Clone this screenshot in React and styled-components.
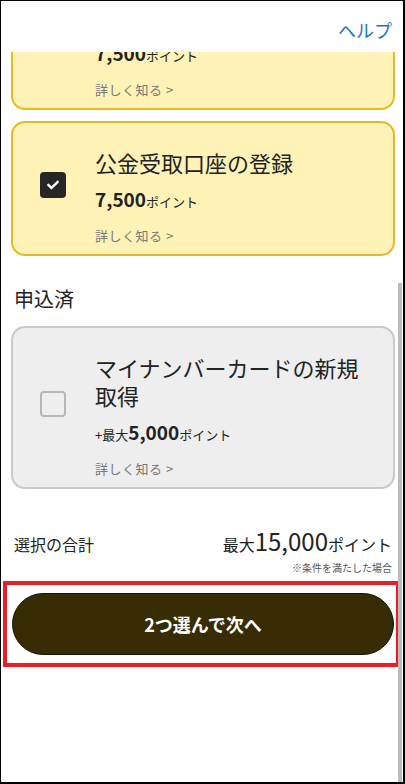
import React from 'react';
import styled, { createGlobalStyle } from 'styled-components';
import { FaCheck } from 'react-icons/fa';

const GlobalStyle = createGlobalStyle`
    html, body {
        margin: 0;
        padding: 0;
        background: #ffffff;
    }
    body {
        font-family: "Noto Sans CJK JP", "Noto Sans", sans-serif;
        color: #222222;
    }
`;

const Frame = styled.div`
    position: relative;
    box-sizing: border-box;
    width: 405px;
    height: 784px;
    border-top: 1px solid #000;
    border-left: 1px solid #000;
    border-right: 2px solid #000;
    border-bottom: 2px solid #000;
    background: #fff;
    display: flex;
    flex-direction: column;
    overflow: hidden;
`;

const Header = styled.header`
    height: 51px;
    flex: none;
    display: flex;
    align-items: center;
    justify-content: flex-end;
    padding-right: 11px;
    background: #fff;
`;

const HelpLink = styled.a`
    font-size: 18px;
    color: #1d76c0;
    text-decoration: none;
    padding-top: 6px;
`;

// the page is scrolled down: the first card sits partly under the header
const Scroller = styled.div`
    flex: 1;
    min-height: 0;
    overflow: hidden;
`;

const Content = styled.main`
    margin-top: ${p => -p.$offset}px;
    padding: 0 8px 0 10px;
    display: flex;
    flex-direction: column;
`;

const Card = styled.div`
    box-sizing: border-box;
    display: flex;
    align-items: center;
    gap: 29px;
    padding: 25px 20px 8px 27px;
    border-radius: 14px;
    border: 2px solid ${p => (p.$done ? '#c9c9c9' : '#e8b923')};
    background: ${p => (p.$done ? '#eeeeee' : '#fff2b6')};
    margin-top: ${p => p.$gap || 0}px;
`;

const Box = styled.span`
    flex: none;
    box-sizing: border-box;
    width: 26px;
    height: 26px;
    border-radius: 4px;
    display: flex;
    align-items: center;
    justify-content: center;
    margin-top: -24px;
    background: ${p => (p.$checked ? '#262626' : '#eeeeee')};
    border: ${p => (p.$checked ? 'none' : '2px solid #b7b7b7')};
    color: #fff;
`;

const Body = styled.div`
    display: flex;
    flex-direction: column;
    min-width: 0;
`;

const Title = styled.div`
    font-size: 22px;
    line-height: 28px;
    color: #222;
`;

const Points = styled.div`
    margin-top: 13px;
    line-height: 26px;
    font-size: 13px;
    color: #222;
`;

const Num = styled.b`
    font-size: 19px;
    line-height: 1;
    font-weight: 700;
`;

const More = styled.a`
    margin-top: 11px;
    line-height: 20px;
    font-size: 13px;
    color: #777;
    letter-spacing: 0.5px;
`;

const Section = styled.h2`
    margin: 29px 0 13px 3px;
    font-size: 20px;
    line-height: 28px;
    font-weight: 400;
    color: #222;
`;

const Total = styled.div`
    margin-top: 38px;
    display: flex;
    justify-content: space-between;
    align-items: baseline;
    padding: 0 3px;
    line-height: 34px;
    font-size: 16px;
    color: #222;
`;

const Big = styled.span`
    font-size: 24px;
    line-height: 1;
`;

const Note = styled.div`
    margin-top: 0;
    text-align: right;
    font-size: 10px;
    line-height: 14px;
    color: #555;
    padding-right: 3px;
`;

const Highlight = styled.div`
    margin: 6px -5px 0 -8px;
    border: 4px solid #ee1c25;
    padding: 8px 2px 8px 5px;
`;

const NextButton = styled.button`
    width: 100%;
    height: 62px;
    border-radius: 31px;
    border: 1px solid #1a1402;
    background: #382c05;
    color: #fff;
    font-family: "Noto Sans CJK JP", "Noto Sans", sans-serif;
    font-size: 18px;
    font-weight: 700;
`;

const Thumb = styled.div`
    position: absolute;
    top: 282px;
    right: 1px;
    bottom: 0;
    width: 4px;
    background: #bcbcbc;
`;

const items = [
    { title: 'マイナポイント', pts: '7,500' },
    { title: '公金受取口座の登録', pts: '7,500' },
];

const App = () => {
    return (
        <Frame>
            <GlobalStyle />
            <Header>
                <HelpLink>ヘルプ</HelpLink>
            </Header>
            <Scroller>
                <Content $offset={77}>
                    {items.map((it, i) => (
                        <Card key={i} $gap={i ? 11 : 0}>
                            <Box $checked>
                                <FaCheck size={12} />
                            </Box>
                            <Body>
                                <Title>{it.title}</Title>
                                <Points>
                                    <Num>{it.pts}</Num>ポイント
                                </Points>
                                <More>詳しく知る &gt;</More>
                            </Body>
                        </Card>
                    ))}

                    <Section>申込済</Section>
                    <Card $done>
                        <Box />
                        <Body>
                            <Title>マイナンバーカードの新規取得</Title>
                            <Points>
                                +最大<Num>5,000</Num>ポイント
                            </Points>
                            <More>詳しく知る &gt;</More>
                        </Body>
                    </Card>

                    <Total>
                        <span>選択の合計</span>
                        <span>
                            最大<Big>15,000</Big>ポイント
                        </span>
                    </Total>
                    <Note>※条件を満たした場合</Note>

                    <Highlight>
                        <NextButton>2つ選んで次へ</NextButton>
                    </Highlight>
                </Content>
            </Scroller>
            <Thumb />
        </Frame>
    );
};

export default App;
